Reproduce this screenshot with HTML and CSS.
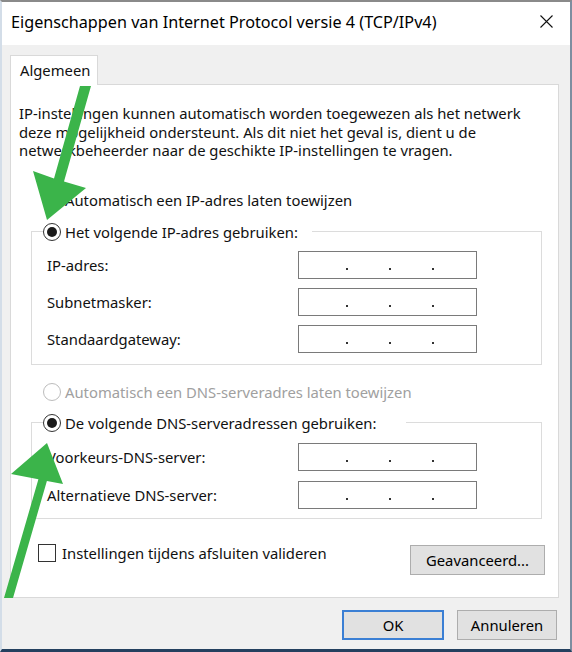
FILE: index.html
```html
<!DOCTYPE html>
<html lang="nl">
<head>
<meta charset="utf-8">
<title>Eigenschappen van Internet Protocol versie 4 (TCP/IPv4)</title>
<link rel="stylesheet" href="styles.css">
</head>
<body>
<div class="window">
  <div class="titlebar">
    <span class="title">Eigenschappen van Internet Protocol versie 4 (TCP/IPv4)</span>
    <svg class="close" width="13" height="13" viewBox="0 0 13 13"><path d="M0.5 0.5 L12.5 12.5 M12.5 0.5 L0.5 12.5" stroke="#111" stroke-width="1.1" fill="none"/></svg>
  </div>
  <div class="main">
    <div class="tabs"><div class="tab">Algemeen</div></div>
    <div class="panel">
      <p class="intro">IP-instellingen kunnen automatisch worden toegewezen als het netwerk<br>deze mogelijkheid ondersteunt. Als dit niet het geval is, dient u de<br>netwerkbeheerder naar de geschikte IP-instellingen te vragen.</p>
      <div class="radio-row first"><span class="radio"></span><span>Automatisch een IP-adres laten toewijzen</span></div>
      <fieldset class="group group-ip">
        <legend><span class="legend-inner"><span class="radio checked"></span><span>Het volgende IP-adres gebruiken:</span></span></legend>
        <div class="field"><span>IP-adres:</span><span class="ipbox"><i></i><i></i><i></i></span></div>
        <div class="field"><span>Subnetmasker:</span><span class="ipbox"><i></i><i></i><i></i></span></div>
        <div class="field"><span>Standaardgateway:</span><span class="ipbox"><i></i><i></i><i></i></span></div>
      </fieldset>
      <div class="radio-row disabled"><span class="radio"></span><span>Automatisch een DNS-serveradres laten toewijzen</span></div>
      <fieldset class="group group-dns">
        <legend><span class="legend-inner"><span class="radio checked"></span><span>De volgende DNS-serveradressen gebruiken:</span></span></legend>
        <div class="field"><span>Voorkeurs-DNS-server:</span><span class="ipbox"><i></i><i></i><i></i></span></div>
        <div class="field"><span>Alternatieve DNS-server:</span><span class="ipbox"><i></i><i></i><i></i></span></div>
      </fieldset>
      <div class="bottom-row">
        <div class="check"><span class="box"></span><span>Instellingen tijdens afsluiten valideren</span></div>
        <button class="btn adv">Geavanceerd...</button>
      </div>
    </div>
    <div class="footer">
      <button class="btn ok">OK</button>
      <button class="btn cancel">Annuleren</button>
    </div>
  </div>
</div>
<svg class="arrows" width="572" height="652" viewBox="0 0 572 652">
  <polygon class="arrow" points="80,86 91,86 64,181.4 86,188 47,220 33,171 54,178.6"/>
  <polygon class="arrow" points="4,598 13,598 46.9,481 63,484 47,443 11,474 38.4,479.3"/>
</svg>
</body>
</html>
```
FILE: styles.css
```css
* { box-sizing: border-box; }
html, body { margin: 0; padding: 0; }
body {
  width: 572px;
  height: 652px;
  position: relative;
  overflow: hidden;
  font-family: "Noto Sans", "Open Sans", sans-serif;
  font-size: 14.8px;
  color: #111;
  background: #f0f0f0;
}
.window {
  width: 572px;
  height: 652px;
  border-top: 2px solid #8a8a8a;
  border-left: 2px solid #d3dde8;
  border-right: 2px solid #7d8ea0;
  border-bottom: 3px solid #24405f;
  background: #f0f0f0;
  display: flex;
  flex-direction: column;
}
.titlebar {
  height: 43px;
  flex: none;
  background: #fff;
  display: flex;
  align-items: flex-start;
  justify-content: space-between;
  padding: 10px 17px 0 9px;
}
.title { font-size: 16.2px; line-height: 21px; color: #000; }
.close { display: block; margin-top: 3px; }
.main {
  flex: 1;
  padding: 10px 11px 0 8px;
  display: flex;
  flex-direction: column;
}
.tabs { display: flex; }
.tab {
  width: 88px;
  height: 30px;
  background: #fff;
  border: 1px solid #d9d9d9;
  border-bottom: none;
  padding-left: 9px;
  line-height: 28px;
  margin-bottom: -1px;
  position: relative;
  z-index: 1;
}
.panel {
  height: 514px;
  flex: none;
  background: #fff;
  border: 1px solid #d9d9d9;
  padding: 19px 16px 0 8px;
  display: flex;
  flex-direction: column;
}
.intro { margin: 0; line-height: 18.5px; white-space: nowrap; }
.radio-row {
  display: flex;
  align-items: center;
  gap: 4px;
  height: 20px;
  padding-left: 24px;
  white-space: nowrap;
}
.radio-row.first { margin-top: 30px; }
.radio-row.disabled { margin-top: 17px; color: #a0a0a0; }
.radio-row.disabled .radio { border-color: #bcbcbc; }
.radio {
  width: 18px;
  height: 18px;
  flex: none;
  border: 1px solid #333;
  border-radius: 50%;
  background: #fff;
  display: inline-flex;
  align-items: center;
  justify-content: center;
}
.radio.checked::after {
  content: "";
  width: 10px;
  height: 10px;
  border-radius: 50%;
  background: #1a1a1a;
}
.group {
  margin: 12px 0 0 12px;
  width: 511px;
  min-width: 0;
  padding: 0 0 11px 15px;
  border: 1px solid #dcdcdc;
}
.group-dns { margin-top: 11px; padding-bottom: 9px; }
.group legend { padding: 0 14px 0 0; margin-left: -4px; }
.group-dns legend { padding-right: 30px; }
.legend-inner { display: flex; align-items: center; gap: 4px; height: 20px; white-space: nowrap; }
.field {
  display: grid;
  grid-template-columns: 251px 179px;
  align-items: center;
  margin-top: 9px;
}
.group-dns .field { margin-top: 10px; }
.ipbox {
  height: 28px;
  border: 1px solid #7a7a7a;
  background: #fff;
  display: flex;
  align-items: center;
  gap: 41px;
  padding: 8px 0 0 47px;
}
.ipbox i { display: block; width: 2px; height: 2px; background: #333; }
.bottom-row {
  margin-top: 24px;
  margin-right: -3px;
  padding-left: 19px;
  display: flex;
  justify-content: space-between;
  align-items: flex-start;
}
.check { display: flex; align-items: center; gap: 6px; height: 20px; white-space: nowrap; }
.box { width: 18px; height: 18px; border: 1px solid #333; background: #fff; flex: none; }
.btn {
  font-family: inherit;
  font-size: 14.8px;
  color: #000;
  background: #e1e1e1;
  border: 1px solid #adadad;
  height: 30px;
  padding: 0;
  margin: 0;
}
.adv { width: 135px; margin-top: 2px; }
.footer {
  display: flex;
  justify-content: flex-end;
  gap: 13px;
  margin-top: 12px;
  padding-right: 2px;
}
.ok { width: 102px; border: 2px solid #3b7fd4; }
.cancel { width: 100px; }
.arrows { position: absolute; left: 0; top: 0; pointer-events: none; }
.arrow { fill: #3bb44a; }
```
